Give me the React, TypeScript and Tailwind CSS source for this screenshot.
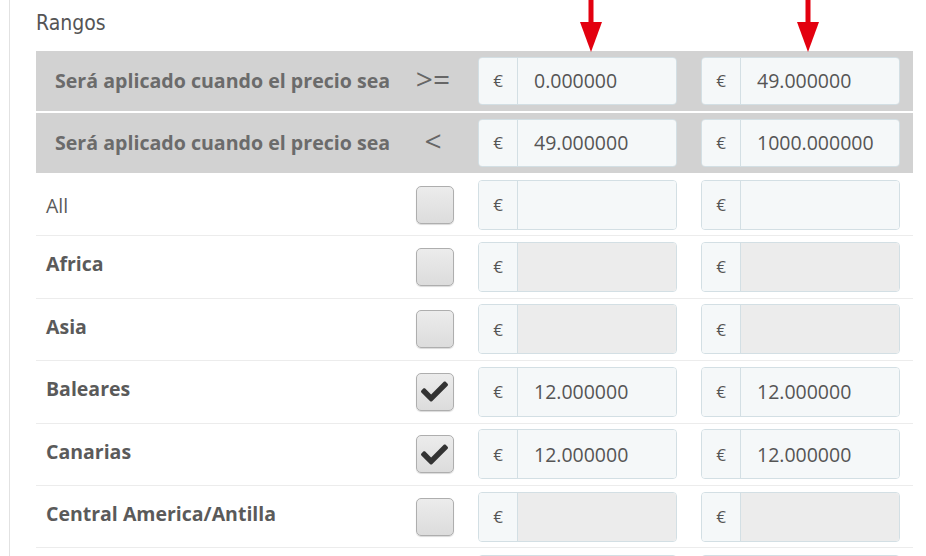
import { FaCheck } from "react-icons/fa";

type Zone = { name: string; bold: boolean; checked: boolean; a: string; b: string };

const zones: Zone[] = [
  { name: "All", bold: false, checked: false, a: "", b: "" },
  { name: "Africa", bold: true, checked: false, a: "", b: "" },
  { name: "Asia", bold: true, checked: false, a: "", b: "" },
  { name: "Baleares", bold: true, checked: true, a: "12.000000", b: "12.000000" },
  { name: "Canarias", bold: true, checked: true, a: "12.000000", b: "12.000000" },
  { name: "Central America/Antilla", bold: true, checked: false, a: "", b: "" },
];

function Arrow({ left }: { left: string }) {
  return (
    <svg className={`absolute top-0 ${left}`} width="24" height="53" viewBox="0 0 24 53">
      <rect x="9.5" y="0" width="5" height="26" fill="#e3000f" />
      <polygon points="1,22 23,22 12,52" fill="#e3000f" />
    </svg>
  );
}

function PriceInput({ value, disabled, h, blank }: { value: string; disabled?: boolean; h: string; blank?: boolean }) {
  return (
    <div className={`flex ${h} w-[199px] rounded-[4px] border border-[#d3dfe4] overflow-hidden`}>
      <div className="flex w-[39px] items-center justify-center border-r border-[#d3dfe4] bg-[#f5f8f9] text-[17px] text-[#555]">
        {blank ? "" : "€"}
      </div>
      <div
        className={`flex flex-1 items-center pl-[16px] text-[19.5px] text-[#555] ${
          disabled ? "bg-[#ececec]" : "bg-[#f5f8f9]"
        }`}
      >
        {value}
      </div>
    </div>
  );
}

function Checkbox({ checked }: { checked: boolean }) {
  return (
    <div className="flex h-[38px] w-[38px] items-center justify-center rounded-[5px] border border-[#aeaeae] bg-gradient-to-b from-[#ececec] to-[#dcdcdc] shadow-[0_1px_1px_rgba(0,0,0,0.15)]">
      {checked && <FaCheck className="text-[27px] text-[#333]" />}
    </div>
  );
}

export default function App() {
  const head = [
    { op: ">=", a: "0.000000", b: "49.000000" },
    { op: "<", a: "49.000000", b: "1000.000000" },
  ];
  return (
    <div className="relative h-[556px] w-[926px] overflow-hidden bg-white font-['Open_Sans',sans-serif]">
      <Arrow left="left-[579px]" />
      <Arrow left="left-[796px]" />
      <div className="ml-[9px] h-full border-l border-[#e2e2e2] pl-[26px] pr-[13px]">
        <h2 className="pt-[9px] h-[51px] text-[21px] leading-[28px] text-[#555] font-['DejaVu_Sans',sans-serif] [font-stretch:condensed]">
          Rangos
        </h2>
        <div className="grid grid-cols-[369px_61px_223px_224px]">
          {head.map((r, i) => (
            <div
              key={i}
              className={`col-span-4 grid h-[60px] grid-cols-subgrid items-center bg-[#d2d2d2] ${
                i === 0 ? "mb-[2px]" : "mb-[1px]"
              }`}
            >
              <div className="pl-[19px] text-[19.6px] font-bold text-[#6b6b6b]">Será aplicado cuando el precio sea</div>
              <div className="-mt-[4px] flex justify-center pr-[5px] text-[30px] leading-none text-[#666]">{r.op}</div>
              <div className="pl-[12px]">
                <PriceInput value={r.a} h="h-[48px]" />
              </div>
              <div className="pl-[12px]">
                <PriceInput value={r.b} h="h-[48px]" />
              </div>
            </div>
          ))}
          {zones.map((z) => (
            <div
              key={z.name}
              className="col-span-4 grid h-[62.4px] grid-cols-subgrid items-center border-b border-[#ececec]"
            >
              <div
                className={`pl-[10px] text-[19.5px] text-[#5a5a5a] ${z.bold ? "-mt-[6px] font-bold" : "mt-[1px] font-normal"}`}
              >
                {z.name}
              </div>
              <div className="flex justify-center pr-[2px]">
                <Checkbox checked={z.checked} />
              </div>
              <div className="pl-[12px]">
                <PriceInput value={z.a} disabled={z.name !== "All" && !z.checked} h="h-[50px]" />
              </div>
              <div className="pl-[12px]">
                <PriceInput value={z.b} disabled={z.name !== "All" && !z.checked} h="h-[50px]" />
              </div>
            </div>
          ))}
          <div className="col-span-4 grid h-[62.4px] grid-cols-subgrid items-center">
            <div />
            <div className="flex justify-center pr-[2px]">
              <Checkbox checked={false} />
            </div>
            <div className="pl-[12px]">
              <PriceInput value="" disabled blank h="h-[50px]" />
            </div>
            <div className="pl-[12px]">
              <PriceInput value="" disabled blank h="h-[50px]" />
            </div>
          </div>
        </div>
      </div>
    </div>
  );
}
